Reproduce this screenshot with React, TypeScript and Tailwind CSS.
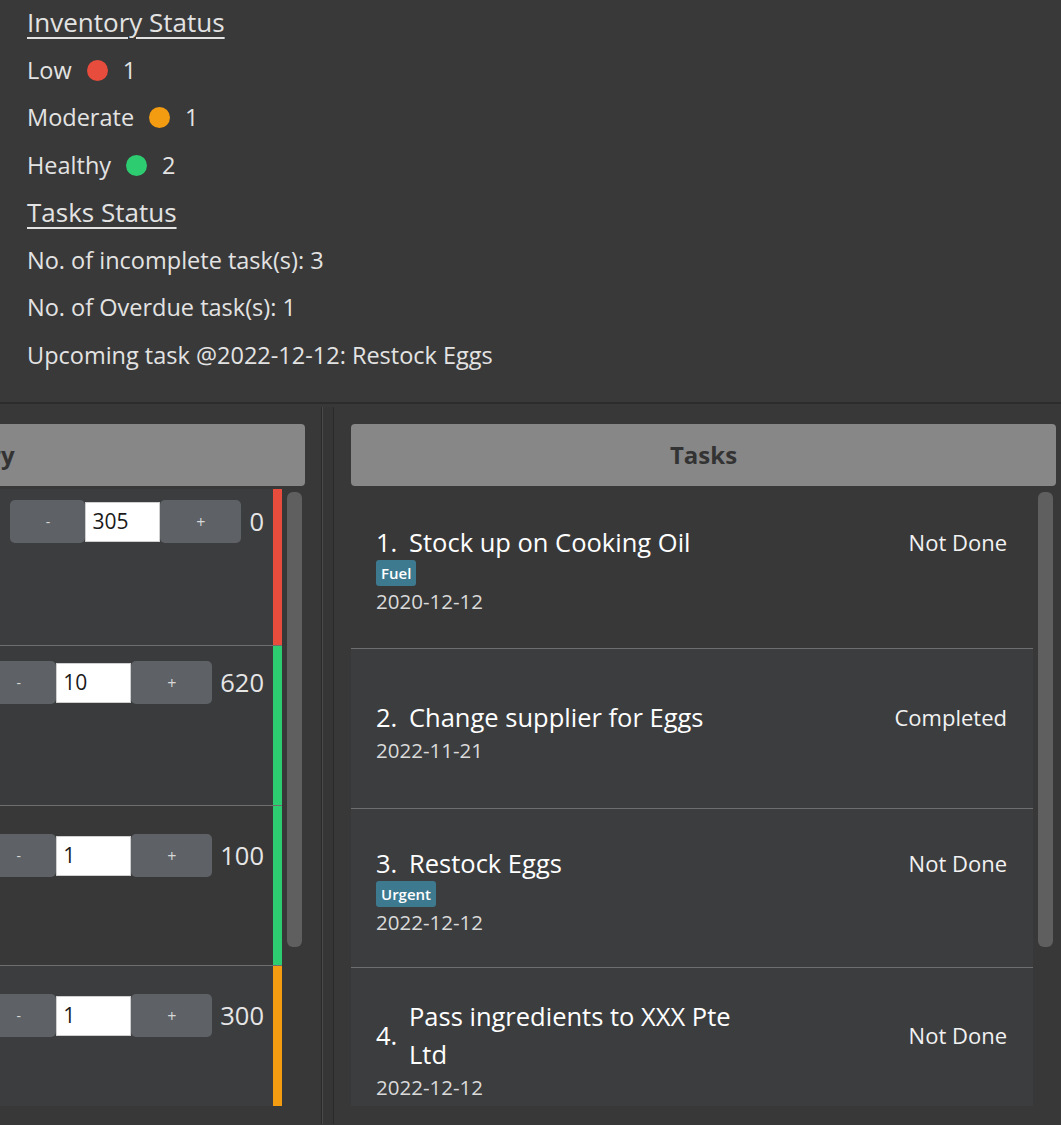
import React from 'react'

type Stock = { qty: string; total: string; bar: string; bg: string; pt: string; h: string; first?: boolean }

const stocks: Stock[] = [
  { qty: '305', total: '0', bar: 'bg-[#e74c3c]', bg: 'bg-[#3c3d3f]', pt: 'pt-[11px]', h: 'h-[156px]', first: true },
  { qty: '10', total: '620', bar: 'bg-[#2ecc71]', bg: 'bg-[#3a3b3d]', pt: 'pt-[15px]', h: 'h-[160px]' },
  { qty: '1', total: '100', bar: 'bg-[#2ecc71]', bg: 'bg-[#383838]', pt: 'pt-[28px]', h: 'h-[160px]' },
  { qty: '1', total: '300', bar: 'bg-[#f39c12]', bg: 'bg-[#3c3d3f]', pt: 'pt-[28px]', h: 'h-[141px]' },
]

function Dot({ color }: { color: string }) {
  return <span className={`inline-block w-[21px] h-[21px] rounded-full ${color}`} />
}

function Scrollbar() {
  return (
    <div className="w-[23px] shrink-0">
      <div className="mt-[3px] ml-[5px] w-[15px] h-[455px] rounded-[6px] bg-[#5f5f5f]" />
    </div>
  )
}

function StockRow({ s }: { s: Stock }) {
  return (
    <div className={`flex justify-end ${s.h} ${s.bg} ${s.first ? '' : 'border-t border-[#6e6e6e]'}`}>
      <div className={`flex items-start ${s.pt}`}>
        <button className="w-[75px] h-[43px] rounded-[5px] bg-[#5e6266] text-[#d8d8d8] text-[14px]">-</button>
        <div className="mt-[1.5px] w-[75px] h-[40px] bg-white border border-[#cfcfcf] pl-[6px] flex items-center text-[21px] text-[#1a1a1a]">
          {s.qty}
        </div>
        <button className="w-[81px] h-[43px] rounded-[5px] bg-[#5e6266] text-[#d8d8d8] text-[16px]">+</button>
        <span className="ml-[8px] mr-[9px] h-[43px] flex items-center text-[25.5px] text-[#e6e6e6]">{s.total}</span>
      </div>
      <div className={`w-[9px] shrink-0 ${s.bar}`} />
    </div>
  )
}

type Task = {
  n: string
  title: string
  status: string
  date: string
  tag?: string
  h: string
  pt: string
  bg: string
  last?: boolean
}

const tasks: Task[] = [
  { n: '1.', title: 'Stock up on Cooking Oil', status: 'Not Done', date: '2020-12-12', tag: 'Fuel', h: 'h-[160px]', pt: 'pt-[34px]', bg: 'bg-[#383838]' },
  { n: '2.', title: 'Change supplier for Eggs', status: 'Completed', date: '2022-11-21', h: 'h-[160px]', pt: 'pt-[49px]', bg: 'bg-[#3c3d3f]' },
  { n: '3.', title: 'Restock Eggs', status: 'Not Done', date: '2022-12-12', tag: 'Urgent', h: 'h-[159px]', pt: 'pt-[35px]', bg: 'bg-[#3c3d3f]' },
  { n: '4.', title: 'Pass ingredients to XXX Pte Ltd', status: 'Not Done', date: '2022-12-12', h: 'h-[138px]', pt: 'pt-[29px]', bg: 'bg-[#3c3d3f]', last: true },
]

function TaskCard({ t }: { t: Task }) {
  return (
    <div className={`${t.h} ${t.bg} ${t.pt} pl-[25px] pr-[26px] overflow-hidden ${t.last ? '' : 'border-b border-[#6e6e6e]'}`}>
      <div className="flex items-center">
        <span className="w-[33px] shrink-0 text-[25.5px] leading-[38px] text-white">{t.n}</span>
        <span className="max-w-[340px] text-[25.5px] leading-[38px] text-white">{t.title}</span>
        <span className="ml-auto text-[22px] text-[#f2f2f2]">{t.status}</span>
      </div>
      {t.tag && (
        <div className="mt-[-1px] h-[26px] inline-flex items-center px-[5px] rounded-[3px] bg-[#3d7a8f] text-white text-[15px] font-semibold">
          {t.tag}
        </div>
      )}
      <div className={`${t.tag ? 'mt-[2px]' : 'mt-[1px]'} text-[20.5px] leading-[26px] text-[#dadada]`}>{t.date}</div>
    </div>
  )
}

export default function App() {
  return (
    <div className="w-[1061px] h-[1125px] overflow-hidden bg-[#383838] font-['Open_Sans','Noto_Sans',sans-serif] text-[#e3e3e3]">
      {/* summary */}
      <section className="h-[405px] bg-[#393939] border-b-2 border-[#2c2c2c] px-[27px]">
        <div className="mt-[-1px] flex flex-col">
          <div className="h-[47.5px] flex items-center">
            <h2 className="text-[26px] underline underline-offset-[5px] decoration-[1.5px]">Inventory Status</h2>
          </div>
          <div className="h-[47.5px] flex items-center gap-[15px] text-[23.5px]">
            <span>Low</span>
            <Dot color="bg-[#e74c3c]" />
            <span>1</span>
          </div>
          <div className="h-[47.5px] flex items-center gap-[15px] text-[23.5px]">
            <span>Moderate</span>
            <Dot color="bg-[#f39c12]" />
            <span>1</span>
          </div>
          <div className="h-[47.5px] flex items-center gap-[15px] text-[23.5px]">
            <span>Healthy</span>
            <Dot color="bg-[#2ecc71]" />
            <span>2</span>
          </div>
          <div className="h-[47.5px] flex items-center">
            <h2 className="text-[26px] underline underline-offset-[5px] decoration-[1.5px]">Tasks Status</h2>
          </div>
          <div className="h-[47.5px] flex items-center text-[23.5px]">No. of incomplete task(s): 3</div>
          <div className="h-[47.5px] flex items-center text-[23.5px]">No. of Overdue task(s): 1</div>
          <div className="h-[47.5px] flex items-center text-[23.5px]">Upcoming task @2022-12-12: Restock Eggs</div>
        </div>
      </section>

      <div className="flex pt-[3px] h-[720px]">
        {/* inventory panel, scrolled so only its right edge shows */}
        <div className="w-[732px] ml-[-410px] shrink-0 border-r border-[#2b2b2b] pl-[17px] pr-[16px] pt-[17px]">
          <div className="h-[62px] rounded-[4px] bg-[#878787] flex items-center justify-center text-[24px] font-bold text-[#333333]">
            Inventory
          </div>
          <div className="mt-[3px] flex h-[617px]">
            <div className="flex-1 flex flex-col">
              {stocks.map((s, i) => (
                <StockRow key={i} s={s} />
              ))}
            </div>
            <Scrollbar />
          </div>
        </div>

        <div className="w-[11px] shrink-0 border-l border-[#4a4a4a] bg-[#363636]" />

        {/* tasks panel */}
        <div className="w-[740px] shrink-0 border-l border-[#2b2b2b] pl-[17px] pr-[17px] pt-[17px]">
          <div className="h-[62px] rounded-[4px] bg-[#878787] flex items-center justify-center text-[24px] font-bold text-[#333333]">
            Tasks
          </div>
          <div className="mt-[3px] flex h-[617px]">
            <div className="flex-1 flex flex-col">
              {tasks.map((t) => (
                <TaskCard key={t.n} t={t} />
              ))}
            </div>
            <Scrollbar />
          </div>
        </div>
      </div>
    </div>
  )
}
